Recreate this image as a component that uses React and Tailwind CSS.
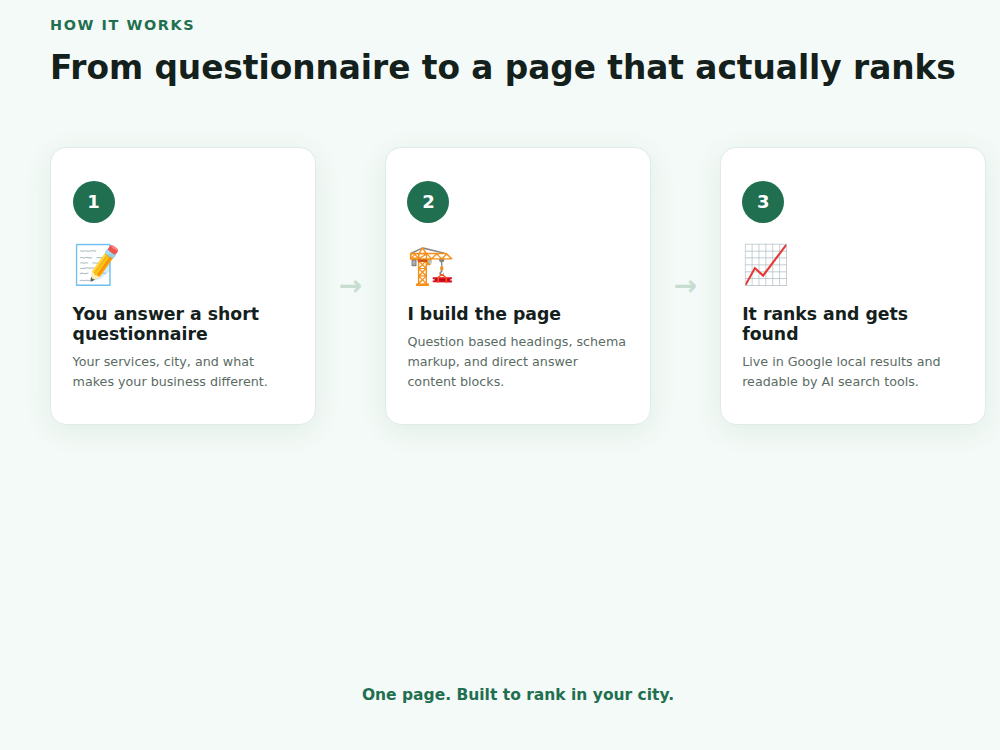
const steps = [
  {
    n: 1,
    icon: "📝",
    title: "You answer a short questionnaire",
    text: "Your services, city, and what makes your business different.",
  },
  {
    n: 2,
    icon: "🏗️",
    title: "I build the page",
    text: "Question based headings, schema markup, and direct answer content blocks.",
  },
  {
    n: 3,
    icon: "📈",
    title: "It ranks and gets found",
    text: "Live in Google local results and readable by AI search tools.",
  },
];

function StepCard({ step }) {
  return (
    <div className="w-[266.4px] h-[278px] shrink-0 bg-white border border-[#e0ebe6] rounded-2xl pt-[33px] px-[21.6px] shadow-[0_6px_28px_rgba(31,111,80,0.09)]">
      <div className="w-[42px] h-[42px] rounded-full bg-[#1f6f50] text-white flex items-center justify-center text-lg font-bold">
        {step.n}
      </div>
      <div className="mt-[17px] h-[50px] text-[38.4px] leading-[50px]">{step.icon}</div>
      <h3 className="mt-[14px] text-[17.28px] leading-5 font-bold text-[#14201b]">{step.title}</h3>
      <p className="mt-2 text-[12.7px] leading-5 text-[#5a6b63]">{step.text}</p>
    </div>
  );
}

export default function App() {
  return (
    <div className="w-[1000px] h-[750px] overflow-hidden bg-[#f4faf7] font-['DejaVu_Sans',sans-serif]">
      <div className="w-[936px] ml-[50px] pt-[15px]">
        <div className="text-[14.4px] leading-5 font-bold tracking-[1.6px] text-[#1f6f50]">HOW IT WORKS</div>
        <h1 className="mt-[12px] text-[32.8px] leading-[42px] tracking-[-0.04px] font-bold text-[#14201b] whitespace-nowrap">
          From questionnaire to a page that actually ranks
        </h1>
        <div className="mt-[58px] flex items-center justify-between">
          <StepCard step={steps[0]} />
          <div className="text-[28px] font-bold text-[#c8ddd2]">→</div>
          <StepCard step={steps[1]} />
          <div className="text-[28px] font-bold text-[#c8ddd2]">→</div>
          <StepCard step={steps[2]} />
        </div>
        <p className="mt-[260px] text-center text-[15.5px] leading-5 font-bold text-[#1f6f50]">
          One page. Built to rank in your city.
        </p>
      </div>
    </div>
  );
}
